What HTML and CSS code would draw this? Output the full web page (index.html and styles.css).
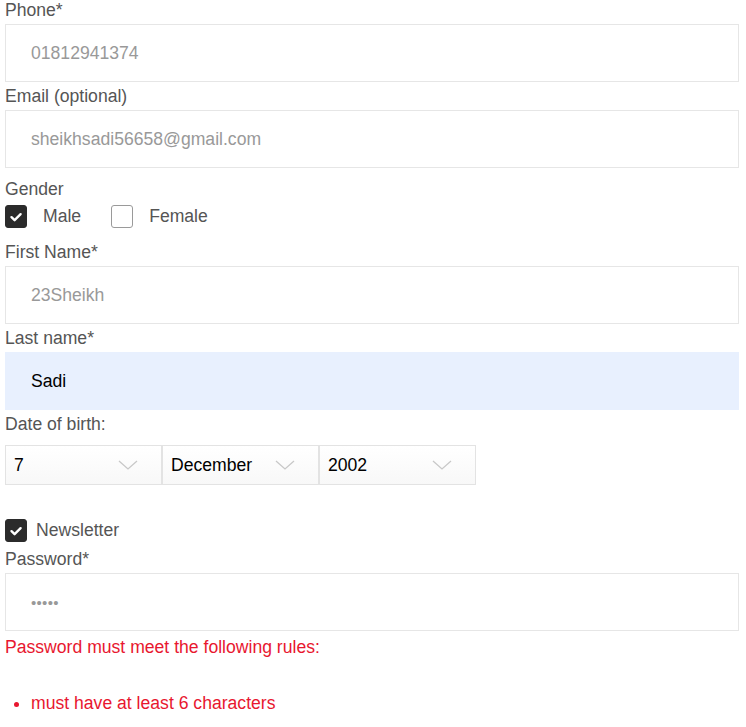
FILE: index.html
```html
<!DOCTYPE html>
<html>
<head>
<meta charset="utf-8">
<link rel="stylesheet" href="styles.css">
</head>
<body>
<form class="form">
  <label class="label">Phone*</label>
  <div class="input"><span class="ph">01812941374</span></div>

  <label class="label">Email (optional)</label>
  <div class="input"><span class="ph">sheikhsadi56658@gmail.com</span></div>

  <label class="label label-gender">Gender</label>
  <div class="gender-row">
    <span class="check checked"><svg viewBox="0 0 22 22" width="22" height="22"><path d="M6.5 11.2 L9.6 14.2 L15.6 8.2" fill="none" stroke="#fff" stroke-width="2.4" stroke-linecap="round" stroke-linejoin="round"/></svg></span>
    <span class="opt">Male</span>
    <span class="check"></span>
    <span class="opt">Female</span>
  </div>

  <label class="label label-first">First Name*</label>
  <div class="input"><span class="ph">23Sheikh</span></div>

  <label class="label">Last name*</label>
  <div class="input autofill"><span class="val">Sadi</span></div>

  <label class="label">Date of birth:</label>
  <div class="dob">
    <div class="select"><span>7</span><svg class="chev" viewBox="0 0 20 10" width="20" height="10"><path d="M1 1 L10 9 L19 1" fill="none" stroke="#c8c8c8" stroke-width="1.3"/></svg></div>
    <div class="select"><span>December</span><svg class="chev" viewBox="0 0 20 10" width="20" height="10"><path d="M1 1 L10 9 L19 1" fill="none" stroke="#c8c8c8" stroke-width="1.3"/></svg></div>
    <div class="select"><span>2002</span><svg class="chev" viewBox="0 0 20 10" width="20" height="10"><path d="M1 1 L10 9 L19 1" fill="none" stroke="#c8c8c8" stroke-width="1.3"/></svg></div>
  </div>

  <div class="news-row">
    <span class="check checked"><svg viewBox="0 0 22 22" width="22" height="22"><path d="M6.5 11.2 L9.6 14.2 L15.6 8.2" fill="none" stroke="#fff" stroke-width="2.4" stroke-linecap="round" stroke-linejoin="round"/></svg></span>
    <span class="opt-news">Newsletter</span>
  </div>

  <label class="label label-pass">Password*</label>
  <div class="input"><span class="dots">•••••</span></div>

  <p class="error">Password must meet the following rules:</p>
  <ul class="rules">
    <li>must have at least 6 characters</li>
  </ul>
</form>
</body>
</html>
```

FILE: styles.css
```css
html, body {
  margin: 0;
  padding: 0;
  background: #fff;
}
body {
  font-family: "Liberation Sans", Arial, sans-serif;
  font-size: 17.6px;
  color: #555;
}
.form {
  display: flex;
  flex-direction: column;
  margin: -4px 7px 0 5px;
}
.label {
  display: block;
  height: 28px;
  line-height: 28px;
  color: #555;
}
.label-gender {
  margin-top: 7px;
}
.label-first {
  margin-top: 10px;
}
.label-pass {
  margin-top: 3px;
}
.input {
  height: 56px;
  border: 1px solid #e6e6e6;
  background: #fff;
  display: flex;
  align-items: center;
  padding-left: 25px;
}
.input.autofill {
  background: #e8f0fe;
  border-color: #e8f0fe;
}
.ph {
  color: #999;
}
.val {
  color: #000;
}
.dots {
  color: #999;
  font-size: 15px;
  letter-spacing: 0.3px;
}
.gender-row {
  display: flex;
  align-items: center;
  height: 23px;
  margin-top: 2px;
}
.check {
  width: 20px;
  height: 21px;
  border: 1px solid #9a9a9a;
  border-radius: 3px;
  background: #fff;
  display: inline-flex;
  align-items: center;
  justify-content: center;
  flex: none;
  overflow: hidden;
}
.check.checked {
  background: #2b2b2b;
  border-color: #2b2b2b;
}
.check svg {
  flex: none;
}
.opt {
  margin-left: 16px;
  margin-right: 30px;
  color: #555;
}
.dob {
  display: flex;
  margin-top: 7px;
}
.select {
  border: 1px solid #e3e3e3;
  background: linear-gradient(#ffffff, #f8f8f8);
  display: flex;
  align-items: center;
  justify-content: space-between;
  padding: 0 23px 0 8px;
  box-sizing: border-box;
  width: 157px;
  height: 40px;
  color: #000;
}
.chev {
  flex: none;
}
.news-row {
  display: flex;
  align-items: center;
  margin-top: 34px;
  height: 23px;
}
.opt-news {
  margin-left: 9px;
  color: #555;
}
.error {
  margin: 4px 0 0;
  line-height: 24px;
  color: #e8172f;
}
.rules {
  margin: 32px 0 0;
  padding-left: 26px;
  color: #e8172f;
  line-height: 24px;
}
```
